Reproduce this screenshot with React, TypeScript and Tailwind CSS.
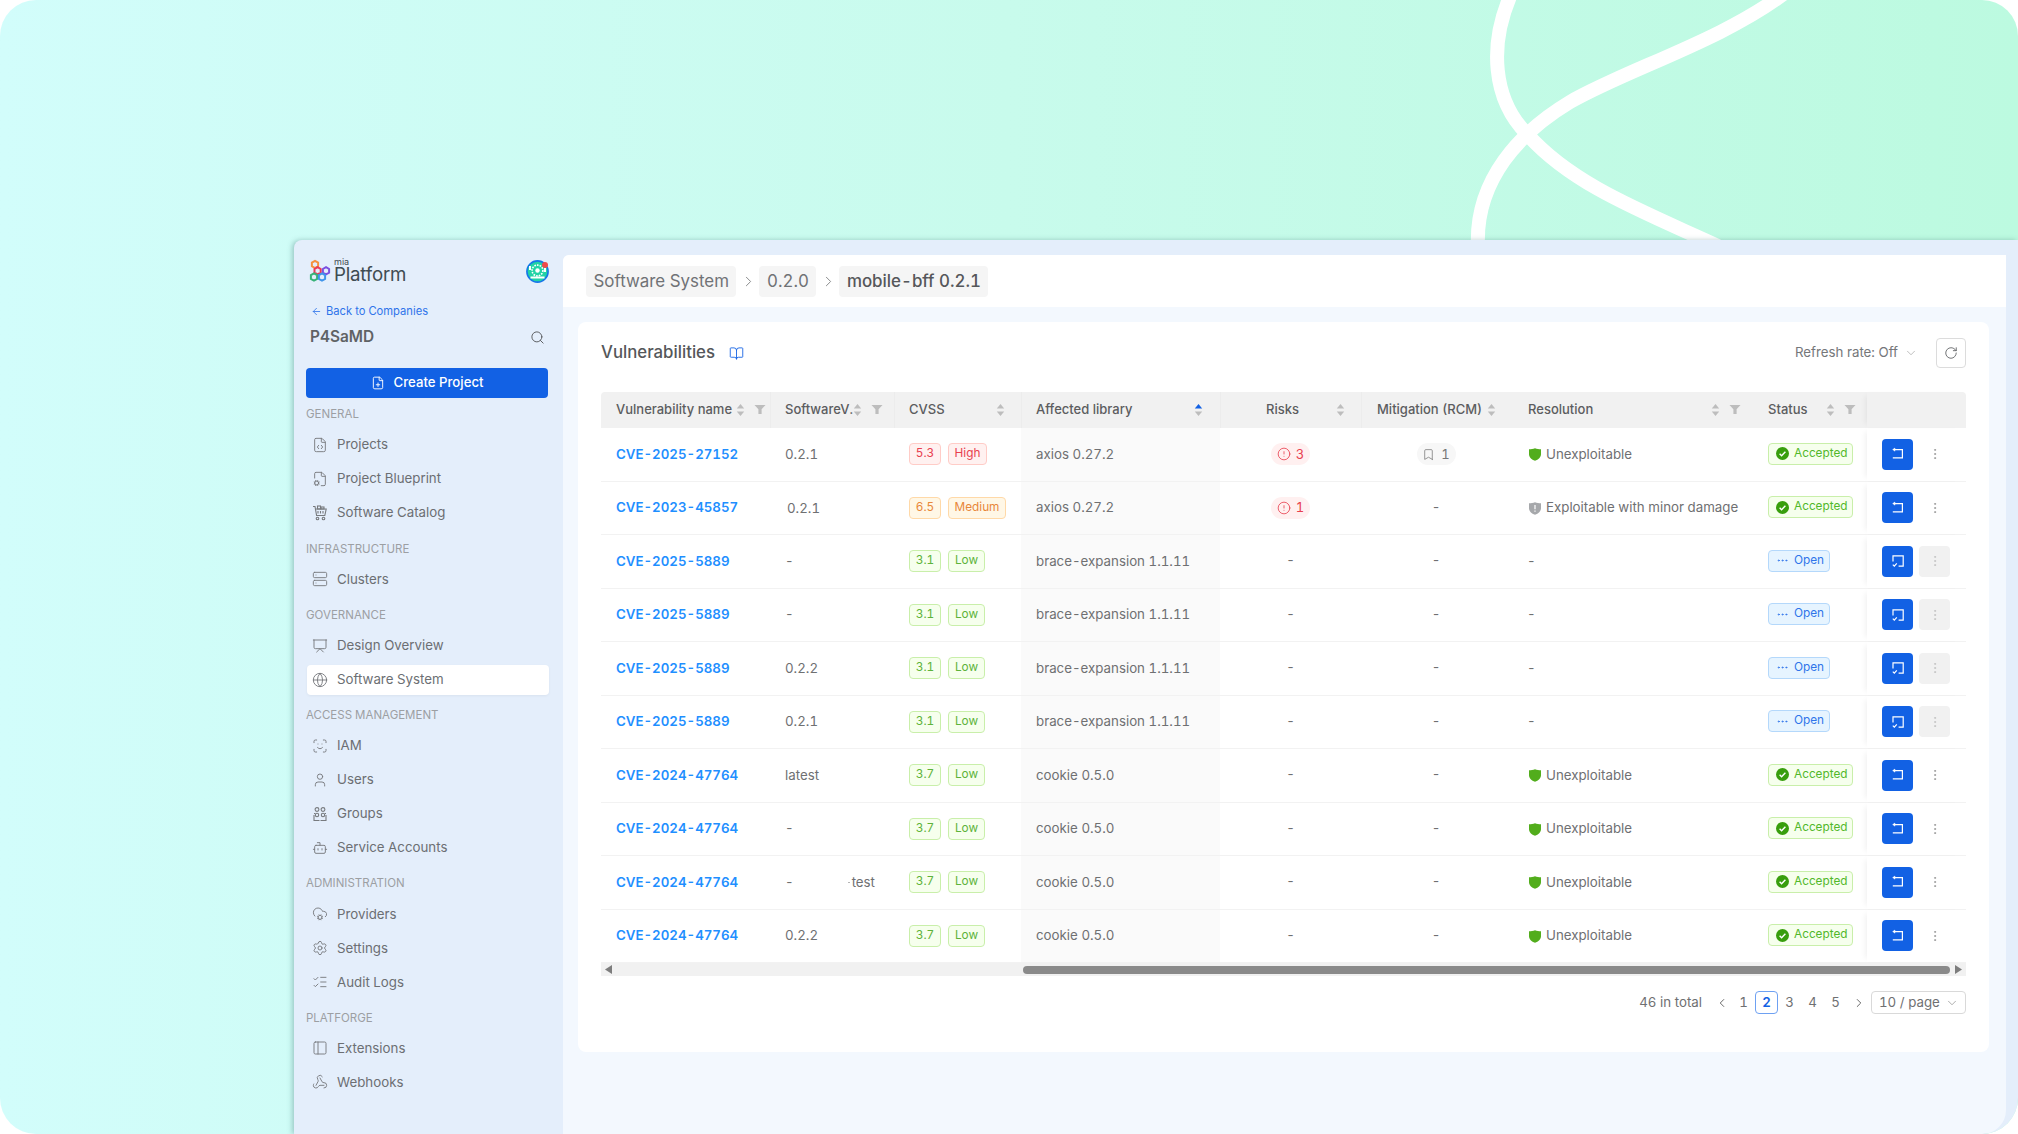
import React from "react";
import {
  ArrowLeft, Search, FilePlus, FileCode, FileCog, Server, Presentation, Globe,
  ScanFace, User, Bot, CloudCog, Settings, ListChecks, PanelLeft, Webhook, BookOpen, ChevronDown,
  ChevronRight, ChevronLeft, RotateCw, CircleAlert, Bookmark, EllipsisVertical, Ellipsis,
} from "lucide-react";

const GroupsIcon = ({ size = 16 }: { size?: number }) => (
  <svg width={size} height={size} viewBox="0 0 16 16" fill="none" stroke="currentColor" strokeWidth="1.1">
    <circle cx="5" cy="3.5" r="1.9" />
    <circle cx="11" cy="3.5" r="1.9" />
    <circle cx="5" cy="9" r="1.7" />
    <circle cx="11" cy="9" r="1.7" />
    <path d="M2 9v5.5h5.5M8.5 14.5H14V9M2 7.5h1M13 7.5h1" />
  </svg>
);

const CartIcon = ({ size = 16 }: { size?: number }) => (
  <svg width={size} height={size} viewBox="0 0 16 16" fill="none" stroke="currentColor" strokeWidth="1.1">
    <path d="M1 1.5h2l1.6 9h8.2l1.4-6.5H4" />
    <rect x="5.5" y="1" width="3" height="3" />
    <rect x="9" y="2" width="3" height="2" />
    <circle cx="5.5" cy="13.5" r="1.3" />
    <circle cx="11.5" cy="13.5" r="1.3" />
    <path d="M6 6v2.5M8.5 6v2.5M11 6v2.5" />
  </svg>
);

type NavItem = { label: string; icon: React.ReactNode; active?: boolean };
type NavGroup = { title: string; items: NavItem[] };

const I = 16;
const sw = 1.4;
const groups: NavGroup[] = [
  {
    title: "General",
    items: [
      { label: "Projects", icon: <FileCode size={I} strokeWidth={sw} /> },
      { label: "Project Blueprint", icon: <FileCog size={I} strokeWidth={sw} /> },
      { label: "Software Catalog", icon: <CartIcon /> },
    ],
  },
  { title: "Infrastructure", items: [{ label: "Clusters", icon: <Server size={I} strokeWidth={sw} /> }] },
  {
    title: "Governance",
    items: [
      { label: "Design Overview", icon: <Presentation size={I} strokeWidth={sw} /> },
      { label: "Software System", icon: <Globe size={I} strokeWidth={sw} />, active: true },
    ],
  },
  {
    title: "Access Management",
    items: [
      { label: "IAM", icon: <ScanFace size={I} strokeWidth={sw} /> },
      { label: "Users", icon: <User size={I} strokeWidth={sw} /> },
      { label: "Groups", icon: <GroupsIcon /> },
      { label: "Service Accounts", icon: <Bot size={I} strokeWidth={sw} /> },
    ],
  },
  {
    title: "Administration",
    items: [
      { label: "Providers", icon: <CloudCog size={I} strokeWidth={sw} /> },
      { label: "Settings", icon: <Settings size={I} strokeWidth={sw} /> },
      { label: "Audit Logs", icon: <ListChecks size={I} strokeWidth={sw} /> },
    ],
  },
  {
    title: "Platforge",
    items: [
      { label: "Extensions", icon: <PanelLeft size={I} strokeWidth={sw} /> },
      { label: "Webhooks", icon: <Webhook size={I} strokeWidth={sw} /> },
    ],
  },
];

const Logo = () => (
  <div className="flex items-center gap-[1px] h-[26px]">
    <svg width="24" height="24" viewBox="0 0 24 24" fill="none" strokeWidth="2">
      <path d="M6 1.8l3.1 1.8v3.6L6 9 2.9 7.2V3.6z" stroke="#f5923e" />
      <path d="M9 8.6l3.1 1.8V14L9 15.8 5.9 14v-3.6z" stroke="#ea3a5a" transform="translate(-0.4 -0.4)" />
      <path d="M17 8.6l3.1 1.8V14L17 15.8 13.9 14v-3.6z" stroke="#7a4fe0" transform="translate(0 -0.4)" />
      <path d="M5 15l3.1 1.8v3.6L5 22.2l-3.1-1.8v-3.6z" stroke="#37b277" transform="translate(0 -0.6)" />
      <path d="M13 15l3.1 1.8v3.6L13 22.2l-3.1-1.8v-3.6z" stroke="#3f94ea" transform="translate(0 -0.6)" />
    </svg>
    <div className="flex flex-col">
      <span className="text-[9px] leading-[8px] text-[#3f4c52]">mia</span>
      <span className="text-[18.7px] leading-[18px] tracking-[-0.2px] text-[#3f4c52]">Platform</span>
    </div>
  </div>
);

const Avatar = () => (
  <div className="relative w-[23px] h-[23px]">
    <svg width="23" height="23" viewBox="0 0 23 23">
      <circle cx="11.5" cy="11.5" r="10.6" fill="#22d3a5" stroke="#1677e8" strokeWidth="1.6" />
      <circle cx="11.5" cy="10.5" r="5.4" fill="none" stroke="#fff" strokeWidth="1.6" strokeDasharray="1.6 1.1" />
      <circle cx="11.5" cy="10.5" r="2.2" fill="#fff" />
      <rect x="4.5" y="16.5" width="14" height="2" fill="#fff" />
      <rect x="3" y="6" width="2" height="4" fill="#fff" />
      <rect x="18" y="8" width="2" height="4" fill="#fff" />
    </svg>
    <span className="absolute top-[2px] right-[1px] w-[6px] h-[6px] rounded-full bg-[#f04a4a]" />
  </div>
);

const Sidebar = () => (
  <aside className="w-[269px] shrink-0 flex flex-col pl-[12px] pr-[14px] pt-[18px] text-[#6c6f73]">
    <div className="flex items-center justify-between pl-[3px] pr-0 h-[26px]">
      <Logo />
      <Avatar />
    </div>
    <div className="flex items-center gap-[4px] pl-[5px] mt-[19px] h-[16px] text-[11.2px] text-[#2f74ea]">
      <ArrowLeft size={11} strokeWidth={1.8} />
      <span>Back to Companies</span>
    </div>
    <div className="flex items-center justify-between pl-[4px] pr-[4px] mt-[7px] h-[22px]">
      <span className="text-[15.4px] font-semibold text-[#5f6265]">P4SaMD</span>
      <Search size={15} strokeWidth={1.5} className="text-[#55585b]" />
    </div>
    <button className="mt-[20px] mb-[-2.3px] h-[30px] w-[242px] flex items-center justify-center gap-[9px] rounded-[4px] bg-[#1261e4] text-white text-[13.2px] font-medium">
      <FilePlus size={14} strokeWidth={1.6} />
      Create Project
    </button>
    {groups.map((g) => (
      <div key={g.title} className="flex flex-col">
        <div className="mt-[10.3px] mb-[4px] h-[18px] flex items-center text-[11.5px] uppercase leading-none text-[#9c9fa3]">{g.title}</div>
        {g.items.map((it) => (
          <div key={it.label} className="h-[34px] flex items-center">
            <div
              className={
                it.active
                  ? "ml-[1px] w-[242px] h-[30px] flex items-center pl-[5px] gap-[9px] rounded-[4px] bg-white shadow-[0_1px_3px_rgba(0,0,0,0.05)]"
                  : "ml-[1px] w-[242px] h-[30px] flex items-center pl-[5px] gap-[9px]"
              }
            >
              <span className="w-[16px] flex justify-center text-[#777a7e]">{it.icon}</span>
              <span className="text-[13.3px] leading-none">{it.label}</span>
            </div>
          </div>
        ))}
      </div>
    ))}
  </aside>
);

const Sort = ({ active }: { active?: boolean }) => (
  <svg width="9" height="14" viewBox="0 0 9 14">
    <path d="M4.5 1L8.2 5.6H.8z" fill={active ? "#1261e4" : "#bdbdbd"} />
    <path d="M4.5 13L.8 8.4h7.4z" fill="#bdbdbd" />
  </svg>
);
const Filter = () => (
  <svg width="12" height="11" viewBox="0 0 12 11">
    <path d="M.5 1h11L7.6 5.2V10H4.4V5.2z" fill="#bdbdbd" />
  </svg>
);

const grid = "grid grid-cols-[169px_124px_127px_199px_141px_150px_241px_115px_99px]";

type Head = { label: string; sort?: boolean; active?: boolean; filter?: boolean; pl: string; pr: string; gap?: string };
const heads: Head[] = [
  { label: "Vulnerability name", sort: true, filter: true, pl: "pl-[15px]", pr: "pr-[4px]" },
  { label: "SoftwareV.", sort: true, filter: true, pl: "pl-[14px]", pr: "pr-[16px]" },
  { label: "CVSS", sort: true, pl: "pl-[14px]", pr: "pr-[16px]" },
  { label: "Affected library", sort: true, active: true, pl: "pl-[14px]", pr: "pr-[17px]" },
  { label: "Risks", sort: true, pl: "pl-[45px]", pr: "pr-[16px]" },
  { label: "Mitigation (RCM)", sort: true, pl: "pl-[15px]", pr: "pr-[15px]" },
  { label: "Resolution", sort: true, filter: true, pl: "pl-[17px]", pr: "pr-[11px]" },
  { label: "Status", sort: true, filter: true, pl: "pl-[16px]", pr: "pr-[11px]" },
];

type Row = {
  cve: string;
  ver: string;
  verShift?: boolean;
  extra?: boolean;
  score: string;
  sev: "High" | "Medium" | "Low";
  lib: string;
  risks?: string;
  mit?: string;
  res?: "Unexploitable" | "Exploitable with minor damage";
  status: "Accepted" | "Open";
};

const rows: Row[] = [
  { cve: "CVE-2025-27152", ver: "0.2.1", score: "5.3", sev: "High", lib: "axios 0.27.2", risks: "3", mit: "1", res: "Unexploitable", status: "Accepted" },
  { cve: "CVE-2023-45857", ver: "0.2.1", verShift: true, score: "6.5", sev: "Medium", lib: "axios 0.27.2", risks: "1", res: "Exploitable with minor damage", status: "Accepted" },
  { cve: "CVE-2025-5889", ver: "-", score: "3.1", sev: "Low", lib: "brace-expansion 1.1.11", status: "Open" },
  { cve: "CVE-2025-5889", ver: "-", score: "3.1", sev: "Low", lib: "brace-expansion 1.1.11", status: "Open" },
  { cve: "CVE-2025-5889", ver: "0.2.2", score: "3.1", sev: "Low", lib: "brace-expansion 1.1.11", status: "Open" },
  { cve: "CVE-2025-5889", ver: "0.2.1", score: "3.1", sev: "Low", lib: "brace-expansion 1.1.11", status: "Open" },
  { cve: "CVE-2024-47764", ver: "latest", score: "3.7", sev: "Low", lib: "cookie 0.5.0", res: "Unexploitable", status: "Accepted" },
  { cve: "CVE-2024-47764", ver: "-", score: "3.7", sev: "Low", lib: "cookie 0.5.0", res: "Unexploitable", status: "Accepted" },
  { cve: "CVE-2024-47764", ver: "-", extra: true, score: "3.7", sev: "Low", lib: "cookie 0.5.0", res: "Unexploitable", status: "Accepted" },
  { cve: "CVE-2024-47764", ver: "0.2.2", score: "3.7", sev: "Low", lib: "cookie 0.5.0", res: "Unexploitable", status: "Accepted" },
];

const sevClass: Record<Row["sev"], string> = {
  High: "bg-[#fff1f0] border-[#ffccc7] text-[#e8404f] w-[39px]",
  Medium: "bg-[#fff7e6] border-[#ffd9a8] text-[#e8873a] w-[58px]",
  Low: "bg-[#f6ffed] border-[#c9efaa] text-[#5db33a] w-[37px]",
};
const scoreClass: Record<Row["sev"], string> = {
  High: "bg-[#fff1f0] border-[#ffccc7] text-[#e8404f] w-[32px]",
  Medium: "bg-[#fff7e6] border-[#ffd9a8] text-[#e8873a] w-[32px]",
  Low: "bg-[#f6ffed] border-[#c9efaa] text-[#5db33a] w-[32px]",
};

const Tag = ({ className, children }: { className: string; children: React.ReactNode }) => (
  <span className={`inline-flex items-center justify-center h-[22px] rounded-[4px] border text-[11.8px] leading-none ${className}`}>{children}</span>
);

const Shield = ({ kind }: { kind: "ok" | "warn" }) => (
  <svg width="12" height="13" viewBox="0 0 12 13">
    <path d="M0 1.2C2 1.2 4.2.9 6 .2c1.8.7 4 1 6 1v5.1c0 3-2.6 5.3-6 6.5-3.4-1.2-6-3.5-6-6.5z" fill={kind === "ok" ? "#52ad1c" : "#a6a8ab"} />
    {kind === "warn" && <path d="M6 3v4.2M6 8.6v1.2" stroke="#fff" strokeWidth="1.2" />}
  </svg>
);

const CheckDot = () => (
  <svg width="13" height="13" viewBox="0 0 13 13">
    <circle cx="6.5" cy="6.5" r="6.5" fill="#389e0d" />
    <path d="M3.6 6.7l2 2 3.8-4" fill="none" stroke="#fff" strokeWidth="1.4" />
  </svg>
);

const ReturnIcon = () => (
  <svg width="16" height="16" viewBox="0 0 16 16" fill="none" stroke="#fff" strokeWidth="1.2">
    <path d="M5 3.6h7.4v8.2H2.8" />
    <path d="M2.6 3.6L5 2v3.2z" fill="#fff" strokeWidth="0.4" />
  </svg>
);
const ReviewIcon = () => (
  <svg width="16" height="16" viewBox="0 0 16 16" fill="none" stroke="#fff" strokeWidth="1.2">
    <path d="M3 8.6V2.8h10.2v10.4H8.6" />
    <path d="M2.8 11.6l1.5 1.5 2.5-2.8" />
  </svg>
);

const Dash = () => <span>-</span>;

const TableRow = ({ r }: { r: Row }) => (
  <div className={`${grid} h-[53.5px] border-b border-[#f2f2f2] text-[13.3px] text-[#6f7072]`}>
    <div className="flex items-center pl-[15px] pt-[1px]">
      <span className="font-semibold text-[#1f8fff]">{r.cve}</span>
    </div>
    <div className="flex items-center pl-[15px] pt-[1px]">
      <span className={r.verShift ? "ml-[2px] mt-[2px]" : ""}>{r.ver}</span>
      {r.extra && (
        <span className="ml-[54px] flex items-center gap-[2px]">
          <span className="w-[2px] h-px bg-[#b5b5b5]" />
          test
        </span>
      )}
    </div>
    <div className="flex items-center pl-[15px] gap-[7px]">
      <Tag className={scoreClass[r.sev]}>{r.score}</Tag>
      <Tag className={sevClass[r.sev]}>{r.sev}</Tag>
    </div>
    <div className="flex items-center pl-[15px] pt-[1px] bg-[#fafafa]">{r.lib}</div>
    <div className="flex items-center justify-center">
      {r.risks ? (
        <span className="w-[39px] h-[22px] rounded-full bg-[#fff0f0] flex items-center justify-center gap-[5px] text-[13px] text-[#e8404f]">
          <CircleAlert size={14} strokeWidth={1.4} />
          {r.risks}
        </span>
      ) : (
        <Dash />
      )}
    </div>
    <div className="flex items-center justify-center">
      {r.mit ? (
        <span className="w-[39px] h-[22px] rounded-full bg-[#f7f7f7] flex items-center justify-center gap-[6px] text-[13px] text-[#777]">
          <Bookmark size={13} strokeWidth={1.4} />
          {r.mit}
        </span>
      ) : (
        <Dash />
      )}
    </div>
    <div className="flex items-center pl-[18px] pt-[1px] gap-[5px]">
      {r.res ? (
        <>
          <Shield kind={r.res === "Unexploitable" ? "ok" : "warn"} />
          <span>{r.res}</span>
        </>
      ) : (
        <span className="ml-[-2px]">-</span>
      )}
    </div>
    <div className="flex items-center pl-[16px] pb-[1px]">
      {r.status === "Accepted" ? (
        <span className="flex items-center gap-[5px] h-[22px] w-[85px] pl-[7px] rounded-[4px] border border-[#c9efaa] bg-[#f6ffed] text-[11.8px] text-[#52b82a]">
          <CheckDot />
          Accepted
        </span>
      ) : (
        <span className="flex items-center gap-[5px] h-[22px] w-[62px] pl-[7px] rounded-[4px] border border-[#b4d8fb] bg-[#e6f4ff] text-[11.8px] text-[#2f74ea]">
          <Ellipsis size={13} strokeWidth={1.6} />
          Open
        </span>
      )}
    </div>
    <div className="flex items-center pl-[15px] gap-[6px] shadow-[-5px_0_6px_-4px_rgba(0,0,0,0.07)]">
      <button className="w-[31px] h-[31px] rounded-[4px] bg-[#1261e4] flex items-center justify-center">
        {r.status === "Accepted" ? <ReturnIcon /> : <ReviewIcon />}
      </button>
      <button className={`w-[31px] h-[31px] rounded-[4px] flex items-center justify-center ${r.status === "Open" ? "bg-[#f1f1f1] text-[#c4c4c4]" : "text-[#9b9b9b]"}`}>
        <EllipsisVertical size={14} strokeWidth={1.6} />
      </button>
    </div>
  </div>
);

const Table = () => (
  <div className="w-[1365px] flex flex-col">
    <div className={`${grid} h-[36px] bg-[#f1f1f1] rounded-t-[4px] text-[13px] font-medium text-[#5c5d5f]`}>
      {heads.map((h, i) => (
        <div key={h.label} className={`flex items-center overflow-hidden pb-[1px] ${h.pl} ${h.pr} ${i > 0 && i < 6 ? "border-l border-[#ececec]" : ""}`}>
          <span className="whitespace-nowrap">{h.label}</span>
          <span className="ml-auto flex items-center gap-[9px] shrink-0">
            {h.sort && <Sort active={h.active} />}
            {h.filter && <Filter />}
          </span>
        </div>
      ))}
      <div className="shadow-[-5px_0_6px_-4px_rgba(0,0,0,0.07)]" />
    </div>
    {rows.map((r, i) => (
      <TableRow key={i} r={r} />
    ))}
    <div className="h-[13px] bg-[#f1f1f1] flex items-center pl-[4px] pr-[4px]">
      <svg width="7" height="9" viewBox="0 0 7 9"><path d="M7 0v9L0 4.5z" fill="#7d7d7d" /></svg>
      <div className="ml-[411px] w-[927px] h-[8px] rounded-full bg-[#8a8a8a]" />
      <svg className="ml-auto" width="7" height="9" viewBox="0 0 7 9"><path d="M0 0v9l7-4.5z" fill="#7d7d7d" /></svg>
    </div>
  </div>
);

const Pagination = () => (
  <div className="mt-[15px] flex items-center justify-end h-[23px] text-[13.3px] text-[#6f7072]">
    <span className="mr-[13px]">46 in total</span>
    <ChevronLeft size={14} strokeWidth={1.5} className="mr-[3px] text-[#555]" />
    <span className="w-[23px] text-center">1</span>
    <span className="w-[23px] h-[23px] rounded-[4px] border border-[#6ea1f2] text-[#1261e4] font-semibold flex items-center justify-center">2</span>
    <span className="w-[23px] text-center">3</span>
    <span className="w-[23px] text-center">4</span>
    <span className="w-[23px] text-center">5</span>
    <ChevronRight size={14} strokeWidth={1.5} className="ml-[5px] text-[#555]" />
    <span className="ml-[5px] w-[95px] h-[23px] rounded-[4px] border border-[#d9d9d9] flex items-center justify-between pl-[7px] pr-[6px]">
      10 / page
      <ChevronDown size={14} strokeWidth={1.2} className="text-[#8b8b8b]" />
    </span>
  </div>
);

const Chip = ({ strong, children }: { strong?: boolean; children: React.ReactNode }) => (
  <span className={`h-[31px] px-[7.5px] pt-[1px] rounded-[4px] bg-[#f5f5f5] flex items-center text-[16.9px] ${strong ? "font-medium text-[#55575a]" : "text-[#707275]"}`}>{children}</span>
);

const Main = () => (
  <main className="w-[1443px] mt-[15px] bg-[#f3f8fe] rounded-tl-[6px] rounded-br-[24px] flex flex-col">
    <div className="h-[52px] bg-white rounded-tl-[6px] flex items-center pl-[23px] text-[#76787a]">
      <Chip>Software System</Chip>
      <span className="w-[23px] flex justify-center pl-[2px]"><ChevronRight size={17} strokeWidth={1.2} /></span>
      <Chip>0.2.0</Chip>
      <span className="w-[23px] flex justify-center pl-[1px]"><ChevronRight size={17} strokeWidth={1.2} /></span>
      <Chip strong>mobile-bff 0.2.1</Chip>
    </div>
    <section className="mt-[15px] ml-[15px] w-[1411px] h-[730px] bg-white rounded-[8px] px-[23px] pt-[16px] flex flex-col">
      <div className="h-[30px] flex items-center mb-[24px]">
        <h2 className="text-[16.8px] font-medium text-[#55575a]">Vulnerabilities</h2>
        <BookOpen size={15} strokeWidth={1.4} className="ml-[14px] text-[#1261e4]" />
        <div className="ml-auto flex items-center text-[13.3px] text-[#75777a]">
          Refresh rate: Off
          <ChevronDown size={14} strokeWidth={1.2} className="ml-[6px] text-[#a3a3a3]" />
          <button className="ml-[18px] w-[30px] h-[30px] rounded-[4px] border border-[#dcdcdc] flex items-center justify-center text-[#55575a]">
            <RotateCw size={14} strokeWidth={1.4} />
          </button>
        </div>
      </div>
      <Table />
      <Pagination />
    </section>
  </main>
);

export default function App() {
  return (
    <div className="relative w-[2018px] h-[1134px] overflow-hidden rounded-[36px] bg-linear-to-r from-[#d2fdfb] via-[#c8fbec] to-[#bcfae0] font-['Inter',sans-serif] tabular-nums">
      <svg className="absolute inset-0" width="2018" height="300" viewBox="0 0 2018 300" fill="none" stroke="#fff" strokeWidth="14">
        <path d="M1512 -8C1488 45 1493 100 1527 134C1572 185 1644 212 1718 246" />
        <path d="M1786 -8C1724 40 1625 70 1570 102C1520 132 1475 180 1478 246" />
      </svg>
      <div className="relative ml-[294px] pt-[240px] h-full">
        <div className="w-[1724px] h-[894px] bg-[#e4eefb] rounded-tl-[8px] flex shadow-[-2px_0_5px_rgba(60,110,110,0.35)]">
          <Sidebar />
          <Main />
        </div>
      </div>
    </div>
  );
}
